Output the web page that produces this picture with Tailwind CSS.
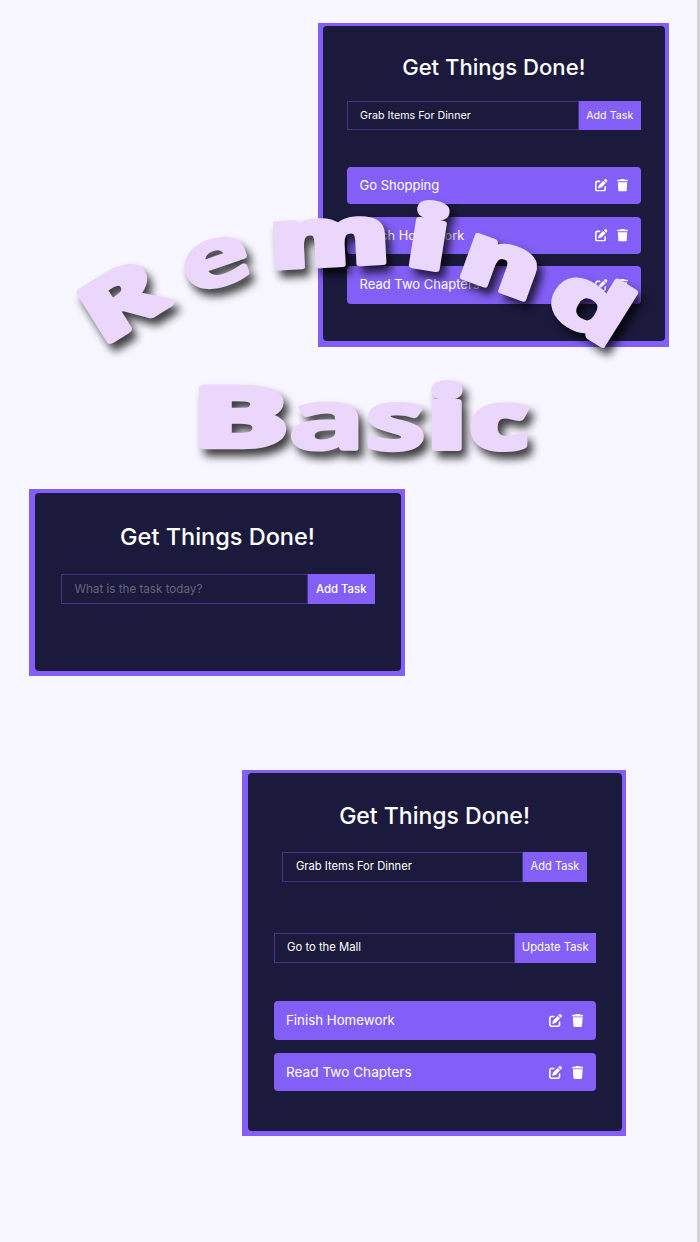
<!DOCTYPE html>
<html lang="en">
<head>
<meta charset="utf-8">
<title>Remind Basic</title>
<script src="https://cdn.jsdelivr.net/npm/@tailwindcss/browser@4"></script>
</head>
<body class="bg-[#f8f7ff]">
<svg class="hidden">
  <symbol id="edit" viewBox="0 0 512 512"><path d="M471.6 21.7c-21.9-21.9-57.3-21.9-79.2 0L362.3 51.7l97.9 97.9 30.1-30.1c21.9-21.9 21.9-57.3 0-79.2L471.6 21.7zm-299.2 220c-6.1 6.1-10.8 13.6-13.5 21.9l-29.6 88.8c-2.9 8.6-.6 18.1 5.8 24.6s15.9 8.7 24.6 5.8l88.8-29.6c8.2-2.7 15.7-7.4 21.9-13.5L437.7 172.3 339.7 74.3 172.4 241.7zM96 64C43 64 0 107 0 160V416c0 53 43 96 96 96H352c53 0 96-43 96-96V320c0-17.7-14.3-32-32-32s-32 14.3-32 32v96c0 17.7-14.3 32-32 32H96c-17.7 0-32-14.3-32-32V160c0-17.7 14.3-32 32-32h96c17.7 0 32-14.3 32-32s-14.3-32-32-32H96z"/></symbol>
  <symbol id="trash" viewBox="0 0 448 512"><path d="M135.2 17.7L128 32H32C14.3 32 0 46.3 0 64S14.3 96 32 96H416c17.7 0 32-14.3 32-32s-14.3-32-32-32H320l-7.2-14.3C307.4 6.8 296.3 0 284.2 0H163.8c-12.1 0-23.2 6.8-28.6 17.7zM416 128H32L53.2 467c1.6 25.3 22.6 45 47.9 45H346.9c25.3 0 46.3-19.7 47.9-45L416 128z"/></symbol>
</svg>
<main class="relative flex h-[1242px] w-[700px] flex-col overflow-hidden border-r-[3px] border-[#d2d2d2] bg-[#f8f7ff] pt-[23px] font-['Inter',sans-serif] text-white">

  <!-- Task list -->
  <section class="ml-[318px] h-[324px] w-[351px] shrink-0 bg-[#835ff7] pt-[3px] pr-[4px] pb-[6px] pl-[4.5px]">
    <div class="flex h-full flex-col rounded-[4px] bg-[#1b1a3d] px-[24.5px] pt-[24.5px]">
      <h1 class="text-center text-[22.1px] leading-[32px] font-medium whitespace-nowrap">Get Things Done!</h1>
      <form class="mt-[18.5px] flex h-[29px] shrink-0 text-[10.7px] leading-[29px]">
        <div class="w-[232px] border border-[#41348a] pl-[12px] leading-[27px]">Grab Items For Dinner</div>
        <div class="flex-1 bg-[#835ff7] text-center whitespace-nowrap">Add Task</div>
      </form>
      <ul class="mt-[37px] flex flex-col gap-[12.5px] text-[13px]">
        <li class="flex h-[37.2px] items-center rounded-[4px] bg-[#835ff7] pr-[12.5px] pl-[12.5px]"><span class="flex-1">Go Shopping</span><svg class="mr-[9.5px] size-[12.5px] fill-white"><use href="#edit"/></svg><svg class="h-[12.5px] w-[11px] fill-white"><use href="#trash"/></svg></li>
        <li class="flex h-[37.2px] items-center rounded-[4px] bg-[#835ff7] pr-[12.5px] pl-[12.5px]"><span class="flex-1 text-[12.8px]">Finish Homework</span><svg class="mr-[9.5px] size-[12.5px] fill-white"><use href="#edit"/></svg><svg class="h-[12.5px] w-[11px] fill-white"><use href="#trash"/></svg></li>
        <li class="flex h-[37.2px] items-center rounded-[4px] bg-[#835ff7] pr-[12.5px] pl-[12.5px]"><span class="flex-1">Read Two Chapters</span><svg class="mr-[9.5px] size-[12.5px] fill-white"><use href="#edit"/></svg><svg class="h-[12.5px] w-[11px] fill-white"><use href="#trash"/></svg></li>
      </ul>
    </div>
  </section>

  <!-- Empty list -->
  <section class="mt-[142px] ml-[29px] h-[187px] w-[376px] shrink-0 bg-[#835ff7] pt-[4px] pr-[4.5px] pb-[5.5px] pl-[5.5px]">
    <div class="flex h-full flex-col rounded-[4px] bg-[#1b1a3d] pr-[26px] pl-[26px] pt-[27px]">
      <h1 class="text-center text-[23.5px] leading-[34px] font-medium whitespace-nowrap">Get Things Done!</h1>
      <form class="mt-[19.5px] flex h-[30.5px] shrink-0 text-[11.4px] leading-[30px]">
        <div class="w-[247.5px] border border-[#41348a] pl-[13px] text-[11.65px] leading-[29px] text-[#656478]">What is the task today?</div>
        <div class="flex-1 bg-[#835ff7] text-center font-medium whitespace-nowrap">Add Task</div>
      </form>
    </div>
  </section>

  <!-- List while a task is edited -->
  <section class="mt-[94px] ml-[242px] h-[365.5px] w-[383.5px] shrink-0 bg-[#835ff7] pt-[3px] pr-[4px] pb-[5px] pl-[5.5px]">
    <div class="flex h-full flex-col rounded-[4px] bg-[#1b1a3d] px-[26px] pt-[26.5px]">
      <h1 class="text-center text-[23px] leading-[33px] font-medium whitespace-nowrap">Get Things Done!</h1>
      <form class="mx-[8.5px] mt-[19.5px] flex h-[29.5px] shrink-0 text-[11.1px] leading-[29px]">
        <div class="w-[241px] border border-[#41348a] pl-[13px] text-[11.2px] leading-[27px]">Grab Items For Dinner</div>
        <div class="flex-1 bg-[#835ff7] text-center whitespace-nowrap">Add Task</div>
      </form>
      <form class="mt-[51.5px] flex h-[29.5px] shrink-0 text-[11.3px] leading-[29px]">
        <div class="w-[241.5px] border border-[#41348a] pl-[12.5px] leading-[27px]">Go to the Mall</div>
        <div class="flex-1 bg-[#835ff7] text-center whitespace-nowrap">Update Task</div>
      </form>
      <ul class="mt-[38.5px] flex flex-col gap-[13px] text-[13.6px]">
        <li class="flex h-[38.7px] items-center rounded-[4px] bg-[#835ff7] px-[12.5px]"><span class="flex-1 pt-px text-[13.3px]">Finish Homework</span><svg class="mr-[9.5px] size-[13px] fill-white"><use href="#edit"/></svg><svg class="h-[13px] w-[11.5px] fill-white"><use href="#trash"/></svg></li>
        <li class="flex h-[38.7px] items-center rounded-[4px] bg-[#835ff7] px-[12.5px]"><span class="flex-1">Read Two Chapters</span><svg class="mr-[9.5px] size-[13px] fill-white"><use href="#edit"/></svg><svg class="h-[13px] w-[11.5px] fill-white"><use href="#trash"/></svg></li>
      </ul>
    </div>
  </section>

  <!-- Arched title -->
  <svg class="absolute top-0 left-0 h-[500px] w-[697px] fill-[#ecd7fc] stroke-[#ecd7fc] stroke-[7px] font-['Open_Sans',sans-serif] text-[100px] font-extrabold [filter:drop-shadow(5px_7px_4.5px_rgb(0_0_0/0.75))] [stroke-linejoin:round] [&_text]:[vector-effect:non-scaling-stroke]" viewBox="0 0 697 500">
    <text class="font-bold stroke-[9px]" transform="translate(125 298) rotate(-32) scale(1.2 .8) translate(-37 35.5)">R</text>
    <text class="font-semibold stroke-[7px]" transform="translate(216 263.5) rotate(-19) scale(1.16 .79) translate(-29 27)">e</text>
    <text class="stroke-[6px]" transform="translate(329.5 243) rotate(-3) scale(1.2 .804) translate(-50 28)">m</text>
    <text transform="translate(429.5 235.5) rotate(9) scale(1.2 .835) translate(-16.5 38.5)">i</text>
    <text class="stroke-[6px]" transform="translate(500.5 267) rotate(20) scale(1.17 .804) translate(-33.5 28)">n</text>
    <text class="font-bold" transform="translate(589.5 301) rotate(32) scale(1.25 .82) translate(-29 37.5)">d</text>
    <text class="font-bold stroke-[9px]" transform="translate(242 417.5) scale(1.44 .815) translate(-35 35.5)">B</text>
    <text class="font-semibold stroke-[7px]" transform="translate(325 426.5) scale(1.29 .79) translate(-27.5 27)">a</text>
    <text class="font-semibold stroke-[8px]" transform="translate(394.5 427) scale(1.17 .78) translate(-23.5 27)">s</text>
    <text transform="translate(447 415.5) scale(1.143 .835) translate(-16.5 38.5)">i</text>
    <text class="font-bold stroke-[9px]" transform="translate(500.5 427.5) scale(1.1 .75) translate(-27 27.5)">c</text>
  </svg>
</main>
</body>
</html>
